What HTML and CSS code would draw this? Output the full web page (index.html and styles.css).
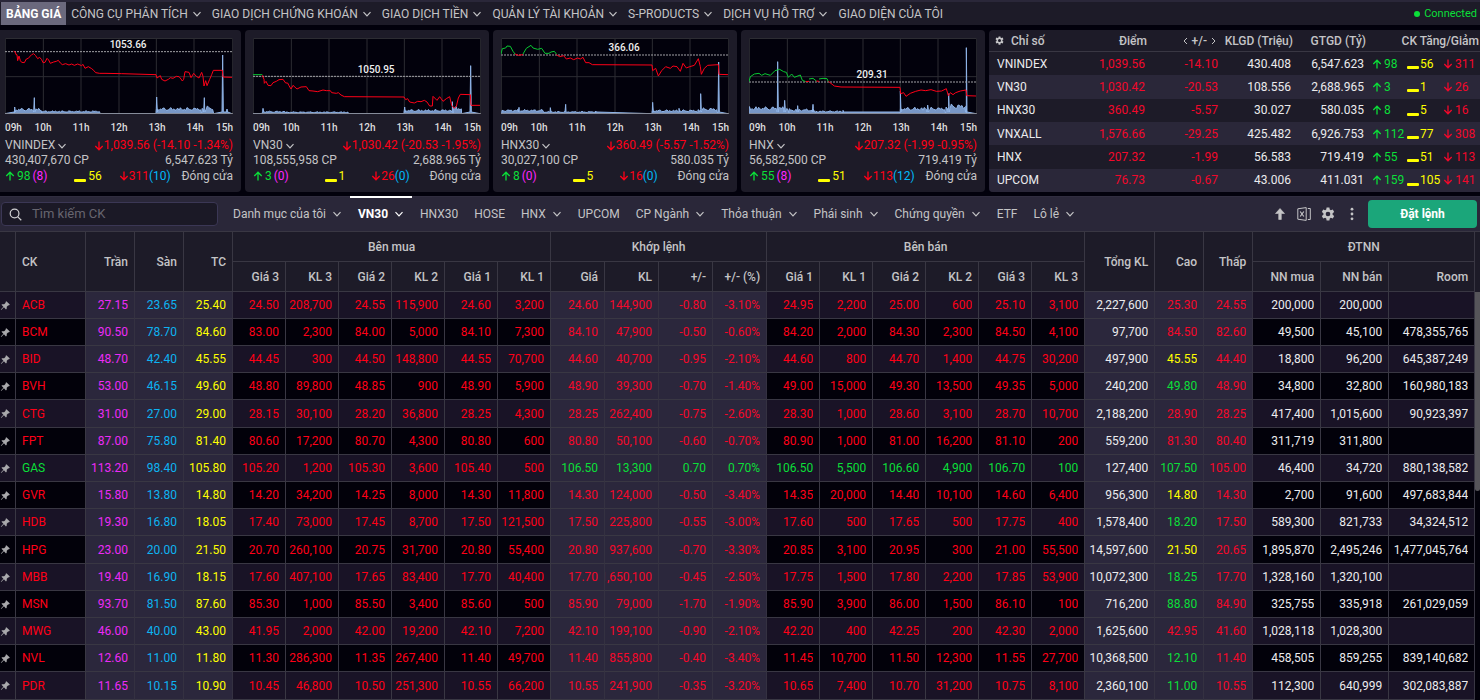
FILE: index.html
```html
<!DOCTYPE html>
<html lang="vi">
<head>
<meta charset="utf-8">
<title>Bảng giá</title>
<link rel="stylesheet" href="styles.css">
</head>
<body>
<svg class="sprite" aria-hidden="true">
  <symbol id="chev" viewBox="0 0 10 10"><path d="M1.5 3.2 5 6.8 8.5 3.2" fill="none" stroke="currentColor" stroke-width="1.2"/></symbol>
  <symbol id="up" viewBox="0 0 10 10"><path d="M5 9.5V1.2M1.3 5 5 1.2 8.7 5" fill="none" stroke="currentColor" stroke-width="1.3"/></symbol>
  <symbol id="down" viewBox="0 0 10 10"><path d="M5 .5v8.3M1.3 5 5 8.8 8.7 5" fill="none" stroke="currentColor" stroke-width="1.3"/></symbol>
  <symbol id="gear" viewBox="0 0 24 24"><path fill="currentColor" fill-rule="evenodd" d="M9.6 1h4.8l.6 3.4 1.9 1.1 3.3-1.2 2.4 4.2-2.7 2.2v2.6l2.7 2.2-2.4 4.2-3.3-1.2-1.9 1.1-.6 3.4H9.600l-.6-3.400-1.900-1.100-3.300 1.200-2.400-4.200 2.700-2.200v-2.600L1.400 8.500l2.400-4.200 3.300 1.200L9 4.400zM12 8a4 4 0 1 0 0 8 4 4 0 0 0 0-8z"/></symbol>
  <symbol id="pin" viewBox="0 0 12 12"><path fill="currentColor" d="M7 1.300 10.700 5 9.700 6 9 5.800 7.400 7.400 7.300 9.600 6.500 10.300 4.300 8 1.600 10.600.900 10.900 1.200 10.200 3.700 7.400 1.600 5.300 2.300 4.600 4.500 4.600 6.200 2.900 6 2.300z"/></symbol>
</svg>

<nav class="nav">
  <a class="nav-link active" href="#">BẢNG GIÁ</a>
  <a class="nav-link" href="#">CÔNG CỤ PHÂN TÍCH<svg class="chev"><use href="#chev"/></svg></a>
  <a class="nav-link" href="#">GIAO DỊCH CHỨNG KHOÁN<svg class="chev"><use href="#chev"/></svg></a>
  <a class="nav-link" href="#">GIAO DỊCH TIỀN<svg class="chev"><use href="#chev"/></svg></a>
  <a class="nav-link" href="#">QUẢN LÝ TÀI KHOẢN<svg class="chev"><use href="#chev"/></svg></a>
  <a class="nav-link" href="#">S-PRODUCTS<svg class="chev"><use href="#chev"/></svg></a>
  <a class="nav-link" href="#">DỊCH VỤ HỖ TRỢ<svg class="chev"><use href="#chev"/></svg></a>
  <a class="nav-link" href="#">GIAO DIỆN CỦA TÔI</a>
  <span class="status"><i class="dot"></i>Connected</span>
</nav>

<section class="market" id="market">
  <div class="card index-card">
    <table class="indices">
      <colgroup><col class="i-name"><col class="i-point"><col class="i-num"><col class="i-num"><col class="i-num"><col class="i-ck"></colgroup>
      <thead>
        <tr>
          <th class="left"><svg class="gear-sm"><use href="#gear"/></svg>Chỉ số</th>
          <th>Điểm</th>
          <th><span class="pager"><svg viewBox="0 0 5 8"><path d="M4 1 1 4l3 3"/></svg>+/-<svg viewBox="0 0 5 8"><path d="m1 1 3 3-3 3"/></svg></span></th>
          <th>KLGD (Triệu)</th><th>GTGD (Tỷ)</th><th>CK Tăng/Giảm</th>
        </tr>
      </thead>
      <tbody id="indexRows"></tbody>
    </table>
  </div>
</section>

<div class="toolbar">
  <label class="search">
    <svg viewBox="0 0 14 14"><circle cx="6" cy="6" r="4.700"/><path d="m9.500 9.500 3.700 3.700"/></svg>
    <input type="text" placeholder="Tìm kiếm CK" aria-label="Tìm kiếm CK">
  </label>
  <div class="tabs">
    <button class="tab">Danh mục của tôi<svg class="chev"><use href="#chev"/></svg></button>
    <button class="tab active">VN30<svg class="chev"><use href="#chev"/></svg></button>
    <button class="tab">HNX30</button>
    <button class="tab">HOSE</button>
    <button class="tab">HNX<svg class="chev"><use href="#chev"/></svg></button>
    <button class="tab">UPCOM</button>
    <button class="tab">CP Ngành<svg class="chev"><use href="#chev"/></svg></button>
    <button class="tab">Thỏa thuận<svg class="chev"><use href="#chev"/></svg></button>
    <button class="tab">Phái sinh<svg class="chev"><use href="#chev"/></svg></button>
    <button class="tab">Chứng quyền<svg class="chev"><use href="#chev"/></svg></button>
    <button class="tab">ETF</button>
    <button class="tab">Lô lẻ<svg class="chev"><use href="#chev"/></svg></button>
  </div>
  <div class="tools">
    <button class="tool" aria-label="Thu gọn"><svg viewBox="0 0 14 14"><path d="M7 1.500 11.500 6.500H8.300V12.500H5.700V6.500H2.500z" fill="currentColor" stroke="currentColor" stroke-width=".6" stroke-linejoin="round"/></svg></button>
    <button class="tool" aria-label="Xuất Excel"><svg viewBox="0 0 14 14" fill="none" stroke="currentColor"><path d="M.8 1.800 9.200.600v12.800L.8 12.200zM10.800 1.500h2.500v11h-2.500"/><path d="m3.200 4.500 3.600 5M6.800 4.500l-3.600 5" stroke-width="1.200"/></svg></button>
    <button class="tool" aria-label="Cài đặt"><svg><use href="#gear"/></svg></button>
    <button class="tool" aria-label="Thêm"><svg viewBox="0 0 14 14" fill="currentColor"><circle cx="7" cy="2.200" r="1.400"/><circle cx="7" cy="7" r="1.400"/><circle cx="7" cy="11.800" r="1.400"/></svg></button>
  </div>
  <button class="order">Đặt lệnh</button>
</div>

<main class="board-wrap">
  <table class="board">
    <colgroup>
      <col class="c-pin"><col class="c-ck"><col class="c-ref"><col class="c-ref"><col class="c-ref">
      <col class="c-q" span="6"><col class="c-match" span="4"><col class="c-q" span="6">
      <col class="c-total"><col class="c-ref"><col class="c-ref"><col class="c-nn"><col class="c-nn"><col class="c-room">
    </colgroup>
    <thead>
      <tr>
        <th rowspan="2"></th><th rowspan="2" class="left">CK</th><th rowspan="2">Trần</th><th rowspan="2">Sàn</th><th rowspan="2">TC</th>
        <th colspan="6" class="group">Bên mua</th><th colspan="4" class="group">Khớp lệnh</th><th colspan="6" class="group">Bên bán</th>
        <th rowspan="2">Tổng KL</th><th rowspan="2">Cao</th><th rowspan="2">Thấp</th><th colspan="3" class="group">ĐTNN</th>
      </tr>
      <tr>
        <th>Giá 3</th><th>KL 3</th><th>Giá 2</th><th>KL 2</th><th>Giá 1</th><th>KL 1</th>
        <th>Giá</th><th>KL</th><th>+/-</th><th>+/- (%)</th>
        <th>Giá 1</th><th>KL 1</th><th>Giá 2</th><th>KL 2</th><th>Giá 3</th><th>KL 3</th>
        <th>NN mua</th><th>NN bán</th><th>Room</th>
      </tr>
    </thead>
    <tbody id="boardRows"></tbody>
  </table>
  <div class="scroll" aria-hidden="true"><div class="scroll-head"></div><div class="thumb"></div></div>
</main>
<script src="app.js"></script>
</body>
</html>
```

FILE: styles.css
```css
:root {
  --red: #ff0017;
  --green: #0bdf39;
  --yellow: #ffff00;
  --violet: #ff25ff;
  --cyan: #00b9f9;
  --panel: #1d1b28;
  --raised: #2a2739;
  --line: #393743;
  --text: #c4c4c6;
}
* { box-sizing: border-box; }
body {
  margin: 0;
  overflow: hidden;
  background: #02010c;
  color: var(--text);
  font: 12px/16px Roboto, "Liberation Sans", sans-serif;
}
.sprite { position: absolute; width: 0; height: 0; }
a { color: inherit; text-decoration: none; }
button, input { font: inherit; color: inherit; background: none; border: 0; padding: 0; }
table { border-spacing: 0; table-layout: fixed; width: 100%; }
svg { flex: none; }
.chev { width: 10px; height: 10px; }
.arrow { width: 10px; height: 10px; }
.red { color: var(--red); }
.green { color: var(--green); }
.yellow { color: var(--yellow); }
.violet { color: var(--violet); }
.cyan { color: var(--cyan); }
.dash { width: 12px; height: 3px; background: var(--yellow); border-radius: 1px; margin-top: 8px; }

/* top navigation */
.nav {
  display: flex;
  height: 25px;
  padding: 0 3px 0 1px;
  border-top: 2px solid var(--raised);
  background: var(--panel);
}
.nav-link { display: flex; align-items: center; gap: 4px; padding: 0 5px; white-space: nowrap; }
.nav-link.active { background: #6b697d; color: #fff; font-weight: 700; }
.status { display: flex; align-items: center; gap: 4px; margin-left: auto; font-size: 11px; color: var(--green); }
.dot { width: 6px; height: 6px; border-radius: 50%; background: var(--green); }

/* market cards */
.market { display: flex; gap: 4px; margin: 5px 0 4px -3px; }
.card { flex: 1 1 0; min-width: 0; height: 162px; padding: 8px 8px 0; border-radius: 4px; background: var(--panel); }
.chart { position: relative; height: 76px; background: #02010c; }
.chart svg { display: block; width: 100%; height: 100%; }
.chart-value {
  position: absolute;
  left: 54%;
  transform: translateX(-50%);
  font-size: 10px;
  line-height: 12px;
  font-weight: 500;
  color: #f0f0f0;
}
.grid { fill: none; stroke: #2d2d33; stroke-width: 1; }
.base { stroke: #85858c; stroke-width: 1; }
.ref { stroke: #a2a2a6; stroke-width: 1; stroke-dasharray: 2 1; }
.price { fill: none; stroke-width: 1; stroke: var(--red); }
.price.up { stroke: #09c832; }
.volume { fill: #7897c6; stroke: #8fb4e8; stroke-width: 1; }
.axis {
  display: grid;
  grid-template-columns: 1fr repeat(5, 2fr) 1fr;
  margin: 8px 0 4px;
  font-size: 10px;
  line-height: 12px;
  font-weight: 500;
  color: #dededf;
  text-align: center;
}
.axis span { display: flex; justify-content: center; }
.axis span:first-child { justify-content: flex-start; }
.axis span:last-child { justify-content: flex-end; }
.row { display: flex; justify-content: space-between; line-height: 15px; white-space: nowrap; }
.row span, .name { display: flex; align-items: center; gap: 2px; }
.row .advance { gap: 2px; margin-right: 16px; }
.row .flat { margin-right: 6px; }
.row .decline, .row .paren { gap: 0; }
.row:last-child { line-height: 16px; }

/* index summary */
.index-card { flex: 0 0 491px; padding: 0; overflow: hidden; border-radius: 4px 0 0 4px; }
.indices { height: 162px; }
.i-name { width: 80px; }
.i-point { width: 80px; }
.i-num { width: 73px; }
.i-ck { width: 113px; }
.indices th { height: 22px; padding: 0 2px 0 0; border-bottom: 1px solid var(--line); font-weight: 500; text-align: right; white-space: nowrap; }
.indices td { padding: 0 4px 0 0; text-align: right; color: #ebebed; font-weight: 400; }
.indices .left { padding-left: 8px; text-align: left; }
.indices th.left { padding-left: 6px; }
.indices .red { color: #f2082b; }
.indices tbody tr:nth-child(even) { background: var(--raised); }
.gear-sm { width: 9px; height: 9px; margin-right: 7px; }
.pager { display: inline-flex; align-items: center; gap: 4px; padding-right: 4px; }
.pager svg { width: 5px; height: 8px; fill: none; stroke: currentColor; }
.indices td:last-child { padding-right: 0; }
.counts { display: grid; grid-template-columns: minmax(35px, auto) minmax(33px, auto) auto; justify-content: start; padding-left: 4px; }
.counts span { display: flex; align-items: center; gap: 2px; }
.counts .yellow { gap: 1px; }
.counts .red, .counts .green { gap: 2px; }
.counts .red { padding-left: 3px; }

/* toolbar */
.toolbar { display: flex; align-items: center; height: 35px; padding: 0 3px 0 1px; background: var(--raised); border-top: 1px solid #302d3f; }
.search { display: flex; align-items: center; width: 217px; height: 24px; padding-left: 7px; border: 1px solid #3b3755; border-radius: 4px; background: #1b1926; }
.search svg { width: 13px; height: 13px; fill: none; stroke: #d0d0d2; stroke-width: 1.3; }
.search input { flex: 1; min-width: 0; margin-left: 10px; font-size: 13px; outline: 0; }
.search input::placeholder { color: #67656f; opacity: 1; }
.tabs { display: flex; align-self: stretch; margin-left: 7px; }
.tab { display: flex; align-items: center; gap: 6px; padding: 0 8px; border-top: 2px solid transparent; border-bottom: 2px solid transparent; margin-top: -1px; white-space: nowrap; }
.tab.active { color: #fff; font-weight: 700; border-top-color: #fff; }
.tools { display: flex; gap: 10px; margin-left: auto; }
.tool { display: flex; }
.tool svg { width: 14px; height: 14px; }
.order { width: 109px; height: 28px; margin-left: 9px; border-radius: 4px; background: #1ba67a; color: #fff; font-weight: 700; }

/* price board */
.board-wrap { display: grid; grid-template-columns: 1fr 5px; }
.c-pin { width: 16px; }
.c-ck { width: 70px; }
.c-ref { width: 49px; }
.c-q { width: 53px; }
.c-match { width: 54px; }
.c-total { width: 70px; }
.c-nn { width: 68px; }
.c-room { width: 86px; }
.board th { height: 30px; padding: 0 6px; background: var(--panel); border: solid var(--line); border-width: 0 1px 1px 0; font-weight: 500; text-align: right; white-space: nowrap; }
.board thead tr:first-child th { border-top-width: 1px; height: 31px; }
.board .group { text-align: center; }
.board .left { text-align: left; }
.board td { height: 27px; padding: 0 6px 0 0; background: #02010a; border: solid var(--line); border-width: 0 1px 1px 0; color: #ececee; }
.board tr:nth-child(odd) td { background: #191326; }
.board tbody tr:nth-child(5n) td { height: 28px; }
.board tbody tr td.alt { background: #2b273c; border-right-color: #343141; }
.board td span { display: flex; justify-content: flex-end; overflow: hidden; }
.board td.left { padding-left: 6px; }
.board td.left span { justify-content: flex-start; }
.board td.pin { padding: 0; color: #a9a9ac; }
.pin svg { display: block; width: 11px; height: 11px; }
.board .red { color: var(--red); }
.board .alt.red { color: #f5082a; }
.board .green { color: var(--green); }
.board .yellow { color: var(--yellow); }
.board .violet { color: #ed2bf7; }
.board .cyan { color: #0db3f2; }
.scroll { background: #02010a; }
.scroll-head { height: 61px; background: var(--panel); border-top: 1px solid var(--line); }
.thumb { height: 199px; border-radius: 0 0 3px 3px; background: #56555a; }
```

FILE: app.js
```js
const use = (id, cls) => `<svg class="${cls}"><use href="#${id}"/></svg>`;

/* Chart units: 681 wide (09h-15h), 228 high. vol: runs of [from, to, height]; spikes: [x, height]. */
const charts = [
  { name: "VNINDEX", value: "1053.66", ref: 40, label: 1, move: "1,039.56 (-14.10 -1.34%)", shares: "430,407,670 CP", cash: "6,547.623 Tỷ", up: 98, ceil: 8, flat: 56, down: 311, floor: 10,
    lines: [["", "26,40 31,42 33,50 36,50 38,68 42,54 46,68 50,73 58,74 64,63 70,61 76,54 80,50 86,47 92,53 98,62 104,58 110,65 114,74 120,73 126,61 131,66 136,76 146,72 154,70 160,67 166,75 172,80 182,77 192,81 200,78 208,82 218,78 230,83 234,79 240,91 250,86 260,92 266,97 272,104 284,106 300,106 350,107 453,110 456,120 466,113 470,124 480,129 490,124 496,119 504,121 514,115 522,116 528,123 532,129 536,124 540,101 552,103 558,119 566,106 574,115 582,120 590,103 594,115 597,144 602,128 606,143 614,124 620,110 625,97 652,97 654,117 681,118"]],
    vol: [[28, 110, 17], [110, 286, 9], [453, 590, 19], [590, 626, 24]], spikes: [[29, 20], [88, 48], [455, 50], [598, 48], [653, 176], [666, 14]] },
  { name: "VN30", value: "1050.95", ref: 114, label: 26, move: "1,030.42 (-20.53 -1.95%)", shares: "108,555,958 CP", cash: "2,688.965 Tỷ", up: 3, ceil: 0, flat: 1, down: 26, floor: 0,
    lines: [["up", "0,110 28,110"], ["", "28,112 33,124 34,136 39,130 45,142 54,143 60,134 70,130 78,125 90,124 98,135 104,135 108,143 114,153 120,142 132,153 144,147 160,146 168,158 180,159 194,161 210,156 220,158 232,158 236,164 250,166 256,164 264,171 274,176 453,177 458,185 464,182 470,192 484,195 494,190 504,191 514,187 522,192 530,204 538,204 540,175 552,187 560,176 570,190 580,182 590,176 596,202 604,211 610,205 616,180 622,169 652,170 654,202 681,202"]],
    vol: [[28, 100, 8], [100, 286, 6], [453, 600, 13], [600, 626, 22]], spikes: [[30, 16], [455, 20], [598, 36], [653, 144]] },
  { name: "HNX30", value: "366.06", ref: 50, label: 4, move: "360.49 (-5.57 -1.52%)", shares: "30,027,100 CP", cash: "580.035 Tỷ", up: 8, ceil: 0, flat: 5, down: 16, floor: 0,
    lines: [["up", "0,48 4,32 14,30 18,24 28,25 36,40 42,48"], ["", "42,48 52,52 66,50"], ["up", "66,48 76,31 90,22 96,30 110,34 122,31 132,46 144,46 150,42 160,40 166,48"], ["", "166,50 176,56 188,53 196,63 208,60 218,65 230,60 238,63 246,58 254,74 264,74 274,80 453,81 455,98 464,91 472,114 482,98 494,86 508,91 516,84 528,86 538,100 546,76 556,90 566,86 580,82 592,62 598,86 601,109 610,91 620,82 652,80 654,109 681,110"]],
    vol: [[2, 130, 13], [130, 284, 7], [453, 590, 12], [590, 650, 18]], spikes: [[54, 19], [148, 18], [194, 28], [284, 8], [455, 34], [534, 16], [599, 60], [653, 155]] },
  { name: "HNX", value: "209.31", ref: 131, label: 31, move: "207.32 (-1.99 -0.95%)", shares: "56,582,500 CP", cash: "719.419 Tỷ", up: 55, ceil: 8, flat: 51, down: 113, floor: 12,
    lines: [["up", "0,131 4,116 16,108 30,106 38,112 48,107 64,112 78,98 92,94 104,101 112,103 118,118 128,108 136,118 154,111 160,127 170,131"], ["", "170,131 180,130"], ["up", "180,123 192,121 202,129"], ["", "202,129 210,130"], ["up", "210,123 222,121 234,122 238,131"], ["", "238,130 256,144 276,147 453,148 455,167 464,164 471,175 484,166 500,160 516,156 530,158 546,155 562,160 578,159 592,152 598,173 604,164 612,170 620,164 634,159 651,156 653,173 681,174"]],
    vol: [[0, 120, 22], [120, 200, 15], [200, 282, 9], [453, 590, 20], [590, 652, 30]], spikes: [[86, 156], [107, 40], [146, 24], [192, 28], [282, 10], [454, 68], [536, 26], [599, 60], [652, 198]] }
];

function volumePath(c) {
  const pts = [];
  c.vol.forEach(([from, to, h]) => {
    pts.push([from, 0]);
    for (let x = from + 1; x < to; x += 4) {
      pts.push([x, h * (0.5 + 0.5 * Math.abs(Math.sin(x * 1.7) * Math.cos(x * 0.31)))]);
    }
    pts.push([to, 0]);
  });
  c.spikes.forEach(([x, h]) => pts.push([x - 2, 5], [x, h], [x + 2, 5]));
  pts.sort((a, b) => a[0] - b[0]);
  return "0,227 " + pts.map(([x, h]) => `${x},${(227 - h).toFixed(1)}`).join(" ") + " 681,227";
}

const market = document.getElementById("market");
charts.forEach(c => {
  const card = document.createElement("article");
  card.className = "card";
  card.innerHTML = `
    <div class="chart">
      <svg viewBox="0 0 684 228" preserveAspectRatio="none">
        <path class="grid" vector-effect="non-scaling-stroke" d="M1 1.500H683V226.500H1zM115 0V228M228 0V228M342 0V228M454 0V228M567 0V228M0 116H684"/>
        <polygon class="volume" vector-effect="non-scaling-stroke" points="${volumePath(c)}"/>
        <path class="base" vector-effect="non-scaling-stroke" d="M0 227H684"/>
        <path class="ref" vector-effect="non-scaling-stroke" d="M0 ${c.ref + 1}H684"/>
        ${c.lines.map(([k, p]) => `<polyline class="price ${k}" vector-effect="non-scaling-stroke" points="${p}"/>`).join("")}
      </svg>
      <span class="chart-value">${c.value}</span>
    </div>
    <div class="axis"><span>09h</span><span>10h</span><span>11h</span><span>12h</span><span>13h</span><span>14h</span><span>15h</span></div>
    <div class="row"><button class="name">${c.name}${use("chev", "chev")}</button><span class="red decline">${use("down", "arrow")}${c.move}</span></div>
    <div class="row"><span>${c.shares}</span><span>${c.cash}</span></div>
    <div class="row">
      <span class="green advance">${use("up", "arrow")}${c.up}<span class="violet">(${c.ceil})</span></span>
      <span class="yellow flat"><i class="dash"></i>${c.flat}</span>
      <span class="red decline">${use("down", "arrow")}${c.down}<span class="cyan">(${c.floor})</span></span>
      <span>Đóng cửa</span>
    </div>`;
  card.querySelector(".chart-value").style.top = c.label + "px";
  market.insertBefore(card, market.lastElementChild);
});

const indices = `VNINDEX 1,039.56 -14.10 430.408 6,547.623 98 56 311
VN30 1,030.42 -20.53 108.556 2,688.965 3 1 26
HNX30 360.49 -5.57 30.027 580.035 8 5 16
VNXALL 1,576.66 -29.25 425.482 6,926.753 112 77 308
HNX 207.32 -1.99 56.583 719.419 55 51 113
UPCOM 76.73 -0.67 43.006 411.031 159 105 141`;
document.getElementById("indexRows").innerHTML = indices.split("\n").map(r => {
  const [n, p, d, v, g, up, flat, down] = r.split(" ");
  return `<tr><td class="left">${n}</td><td class="red">${p}</td><td class="red">${d}</td><td>${v}</td><td>${g}</td>
    <td><div class="counts"><span class="green">${use("up", "arrow")}${up}</span><span class="yellow"><i class="dash"></i>${flat}</span><span class="red">${use("down", "arrow")}${down}</span></div></td></tr>`;
}).join("");

/* code, ceiling, floor, reference, 3 bids, match, 3 asks, total, high, low, foreign buy, foreign sell, room */
const quotes = `ACB 27.15 23.65 25.40 24.50 208,700 24.55 115,900 24.60 3,200 24.60 144,900 -0.80 -3.10% 24.95 2,200 25.00 600 25.10 3,100 2,227,600 25.30 24.55 200,000 200,000
BCM 90.50 78.70 84.60 83.00 2,300 84.00 5,000 84.10 7,300 84.10 47,900 -0.50 -0.60% 84.20 2,000 84.30 2,300 84.50 4,100 97,700 84.50 82.60 49,500 45,100 478,355,765
BID 48.70 42.40 45.55 44.45 300 44.50 148,800 44.55 70,700 44.60 40,700 -0.95 -2.10% 44.60 800 44.70 1,400 44.75 30,200 497,900 45.55 44.40 18,800 96,200 645,387,249
BVH 53.00 46.15 49.60 48.80 89,800 48.85 900 48.90 5,900 48.90 39,300 -0.70 -1.40% 49.00 15,000 49.30 13,500 49.35 5,000 240,200 49.80 48.90 34,800 32,800 160,980,183
CTG 31.00 27.00 29.00 28.15 30,100 28.20 36,800 28.25 4,300 28.25 262,400 -0.75 -2.60% 28.30 1,000 28.60 3,100 28.70 10,700 2,188,200 28.90 28.25 417,400 1,015,600 90,923,397
FPT 87.00 75.80 81.40 80.60 17,200 80.70 4,300 80.80 600 80.80 50,100 -0.60 -0.70% 80.90 1,000 81.00 16,200 81.10 200 559,200 81.30 80.40 311,719 311,800
GAS 113.20 98.40 105.80 105.20 1,200 105.30 3,600 105.40 500 106.50 13,300 0.70 0.70% 106.50 5,500 106.60 4,900 106.70 100 127,400 107.50 105.00 46,400 34,720 880,138,582
GVR 15.80 13.80 14.80 14.20 34,200 14.25 8,000 14.30 11,800 14.30 124,000 -0.50 -3.40% 14.35 20,000 14.40 10,100 14.60 6,400 956,300 14.80 14.30 2,700 91,600 497,683,844
HDB 19.30 16.80 18.05 17.40 73,000 17.45 8,700 17.50 121,500 17.50 225,800 -0.55 -3.00% 17.60 500 17.65 500 17.75 400 1,578,400 18.20 17.50 589,300 821,733 34,324,512
HPG 23.00 20.00 21.50 20.70 260,100 20.75 31,700 20.80 55,400 20.80 937,600 -0.70 -3.30% 20.85 3,100 20.95 300 21.00 55,500 14,597,600 21.50 20.65 1,895,870 2,495,246 1,477,045,764
MBB 19.40 16.90 18.15 17.60 407,100 17.65 83,400 17.70 40,400 17.70 1,650,100 -0.45 -2.50% 17.75 1,500 17.80 2,200 17.85 53,900 10,072,300 18.25 17.70 1,328,160 1,320,100
MSN 93.70 81.50 87.60 85.30 1,000 85.50 3,400 85.60 500 85.90 79,000 -1.70 -1.90% 85.90 3,900 86.00 1,500 86.10 100 716,200 88.80 84.90 325,755 335,918 261,029,059
MWG 46.00 40.00 43.00 41.95 2,000 42.00 19,200 42.10 7,200 42.10 199,100 -0.90 -2.10% 42.20 400 42.25 200 42.30 2,000 1,625,600 42.95 41.60 1,028,118 1,028,300
NVL 12.60 11.00 11.80 11.30 286,300 11.35 267,400 11.40 49,700 11.40 855,800 -0.40 -3.40% 11.45 10,700 11.50 12,300 11.55 27,700 10,368,500 12.10 11.40 458,505 859,255 839,140,682
PDR 11.65 10.15 10.90 10.45 46,800 10.50 251,300 10.55 66,200 10.55 241,900 -0.35 -3.20% 10.65 7,400 10.70 31,200 10.75 8,100 2,360,100 11.00 10.55 112,300 640,999 302,083,887`;

const ALT = new Set([1, 2, 3, 10, 11, 12, 13, 20, 21, 22]);
document.getElementById("boardRows").innerHTML = quotes.split("\n").map(line => {
  const q = line.split(" ");
  const ref = +q[3];
  const tone = price => (+price > ref ? "green" : +price < ref ? "red" : "yellow");
  const color = i => {
    if (i === 0 || (i >= 10 && i <= 13)) return tone(q[10]);
    if (i <= 3) return ["", "violet", "cyan", "yellow"][i];
    if (i < 20) return tone(q[i - (i % 2)]);
    if (i === 21 || i === 22) return tone(q[i]);
    return "";
  };
  let cells = `<td class="pin">${use("pin", "")}</td>`;
  for (let i = 0; i < 26; i++) {
    cells += `<td class="${i ? "" : "left "}${ALT.has(i) ? "alt " : ""}${color(i)}"><span>${q[i] || ""}</span></td>`;
  }
  return `<tr>${cells}</tr>`;
}).join("");
```
